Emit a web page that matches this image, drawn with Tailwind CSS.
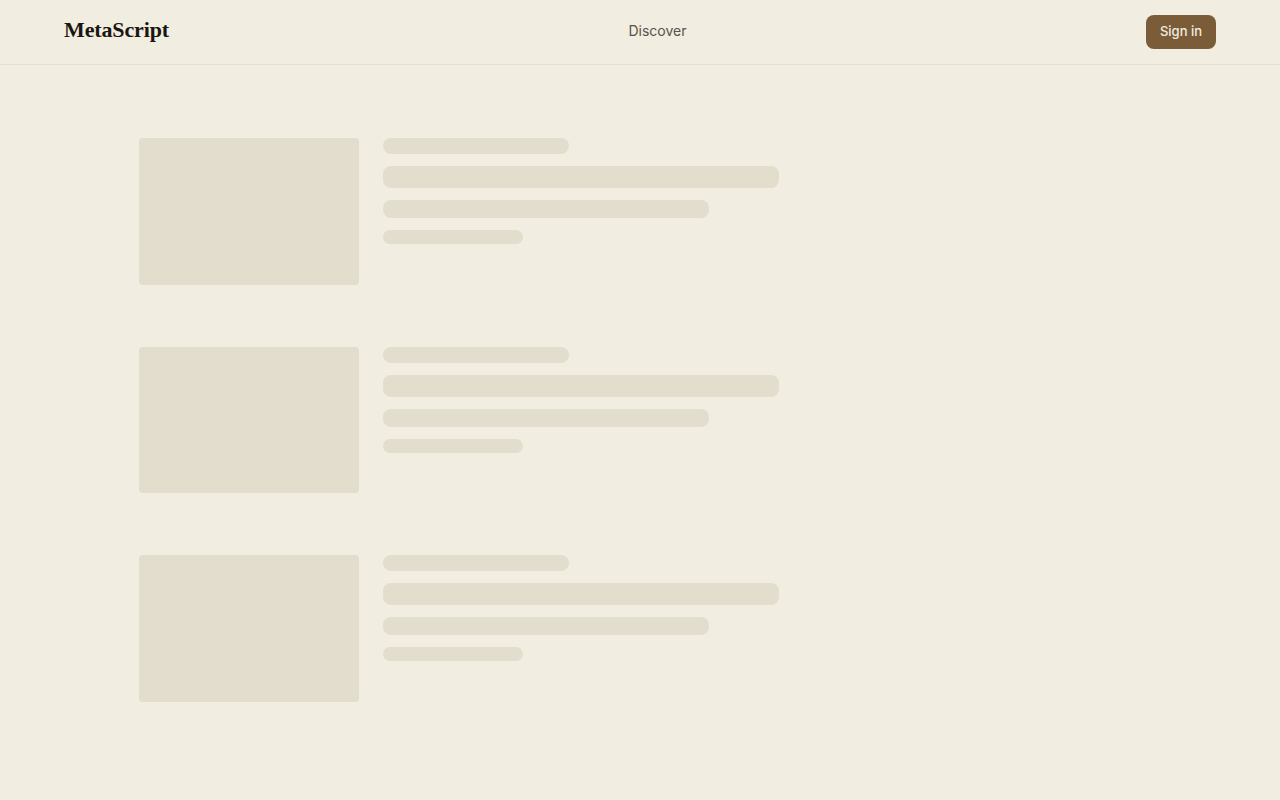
<!DOCTYPE html>
<html lang="en">
<head>
    <meta charset="UTF-8">
    <meta name="viewport" content="width=device-width, initial-scale=1.0">
    <title>MetaScript</title>
    <script src="https://cdn.jsdelivr.net/npm/@tailwindcss/browser@4"></script>
</head>
<body class="bg-[#f1ede0] min-h-screen font-['Inter',sans-serif]">
<header class="h-[65px] border-b border-[#e3dfd1] px-16 flex items-center justify-between">
    <a href="#" class="font-['Liberation_Serif',serif] font-bold text-[22px] tracking-[-0.13px] leading-none text-[#1a1712] -mt-[4px]">MetaScript</a>
    <nav class="-mt-[5px]">
        <a href="#" class="text-sm text-[#57534a]">Discover</a>
    </nav>
    <button class="h-[34px] w-[70px] rounded-lg bg-[#7a5c38] text-[13px] font-medium text-[#f1ede0]">Sign in</button>
</header>

<main class="px-[139px] pt-[73px] flex flex-col gap-[62px]">
    <div class="flex gap-6">
        <div class="w-[220px] aspect-[3/2] rounded-sm bg-[#e3ddcd]"></div>
        <div class="flex flex-col">
            <div class="w-[186px] h-4 rounded-lg bg-[#e3ddcd]"></div>
            <div class="w-[396px] h-[22px] mt-3 rounded-lg bg-[#e3ddcd]"></div>
            <div class="w-[326px] h-[18px] mt-3 rounded-lg bg-[#e3ddcd]"></div>
            <div class="w-[140px] h-3.5 mt-3 rounded-lg bg-[#e3ddcd]"></div>
        </div>
    </div>
    <div class="flex gap-6">
        <div class="w-[220px] aspect-[3/2] rounded-sm bg-[#e3ddcd]"></div>
        <div class="flex flex-col">
            <div class="w-[186px] h-4 rounded-lg bg-[#e3ddcd]"></div>
            <div class="w-[396px] h-[22px] mt-3 rounded-lg bg-[#e3ddcd]"></div>
            <div class="w-[326px] h-[18px] mt-3 rounded-lg bg-[#e3ddcd]"></div>
            <div class="w-[140px] h-3.5 mt-3 rounded-lg bg-[#e3ddcd]"></div>
        </div>
    </div>
    <div class="flex gap-6">
        <div class="w-[220px] aspect-[3/2] rounded-sm bg-[#e3ddcd]"></div>
        <div class="flex flex-col">
            <div class="w-[186px] h-4 rounded-lg bg-[#e3ddcd]"></div>
            <div class="w-[396px] h-[22px] mt-3 rounded-lg bg-[#e3ddcd]"></div>
            <div class="w-[326px] h-[18px] mt-3 rounded-lg bg-[#e3ddcd]"></div>
            <div class="w-[140px] h-3.5 mt-3 rounded-lg bg-[#e3ddcd]"></div>
        </div>
    </div>
</main>
</body>
</html>
